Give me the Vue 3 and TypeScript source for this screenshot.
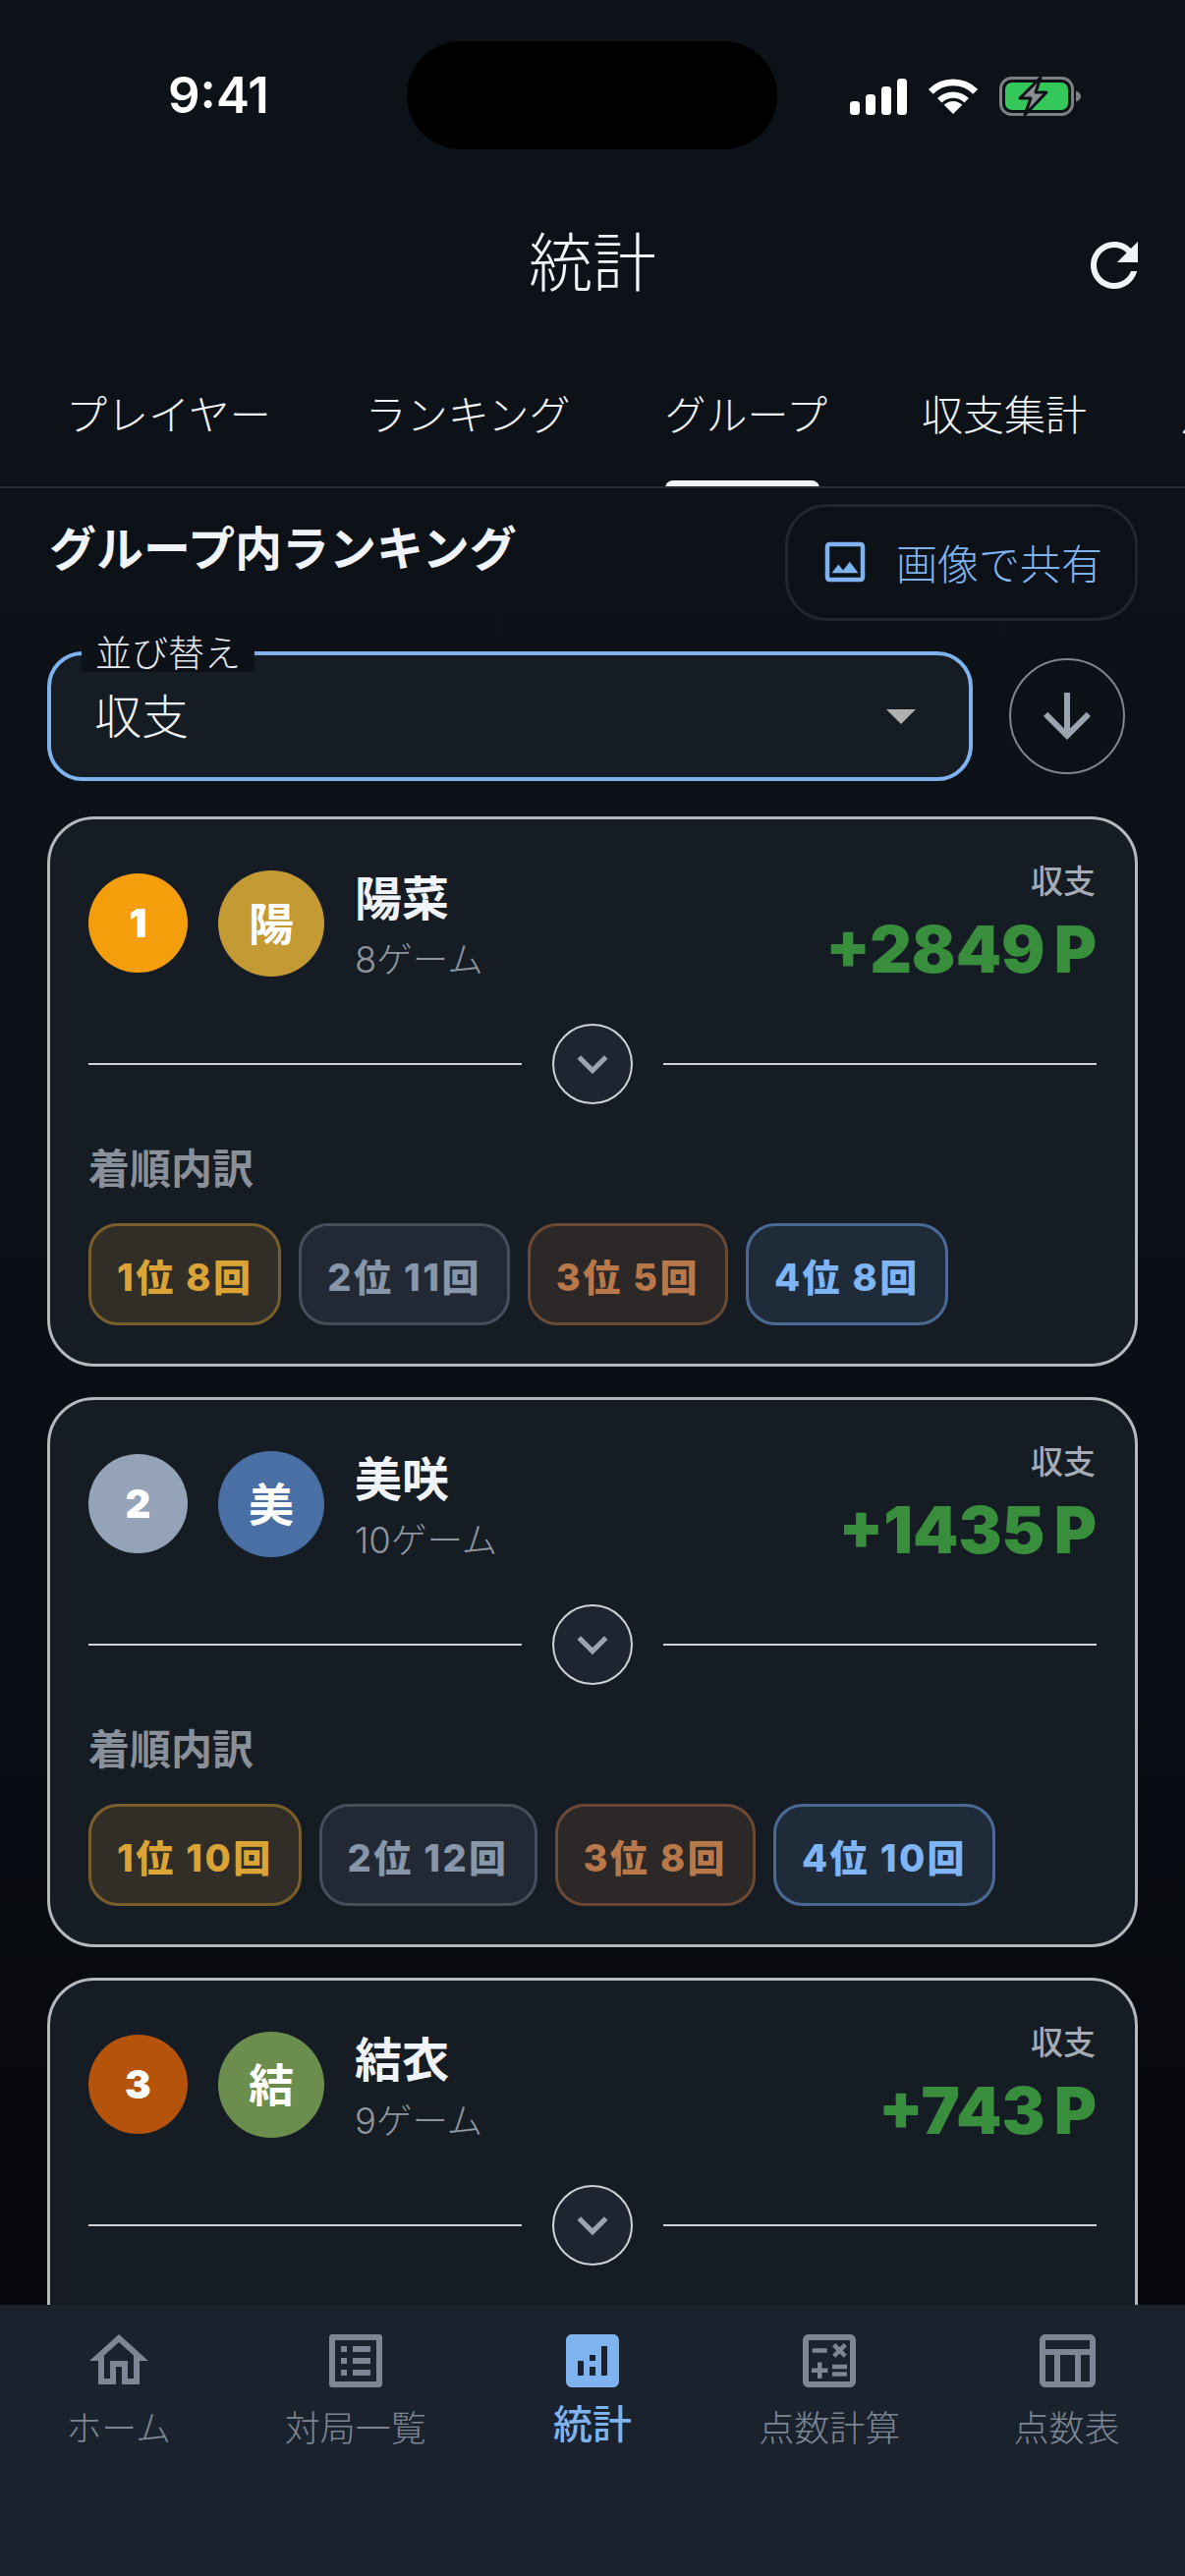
<template>
  <div class="page">
    <div class="status">
      <span class="time">9:41</span>
      <div class="island"></div>
      <div class="status-icons">
        <svg class="signal" width="58" height="37" viewBox="0 0 58 37" fill="#fff">
          <rect x="0" y="23" width="10" height="14" rx="3.5" />
          <rect x="16" y="16" width="10" height="21" rx="3.5" />
          <rect x="32" y="8" width="10" height="29" rx="3.5" />
          <rect x="48" y="0" width="10" height="37" rx="3.5" />
        </svg>
        <svg width="50" height="37" viewBox="0 0 50 38" fill="none" stroke="#fff">
          <path d="M1.7 13.7A33 33 0 0 1 48.3 13.7" stroke-width="7" />
          <path d="M10.9 22.9A20 20 0 0 1 39.1 22.9" stroke-width="6.5" />
          <path d="M25 37L15.5 27.5A13.4 13.4 0 0 1 34.5 27.5Z" fill="#fff" stroke="none" />
        </svg>
        <svg class="battery" width="84" height="40" viewBox="0 0 84 40">
          <rect x="1.5" y="1.5" width="73" height="37" rx="11" fill="none" stroke="#7e8083" stroke-width="3" />
          <rect x="6" y="6" width="64" height="28" rx="7" fill="#34c759" />
          <path d="M78 14.5q5 2 5 5.5t-5 5.5z" fill="#7e8083" />
          <path d="M42 1L21 22h11l-6 17 22-23H37z" fill="#8a8c90" stroke="#0d1118" stroke-width="3" stroke-linejoin="round" />
        </svg>
      </div>
    </div>

    <header class="header">
      <h1 class="title">統計</h1>
      <svg class="refresh" width="72" height="72" viewBox="0 0 24 24" fill="#f0f4f8">
        <path d="M17.65 6.35C16.2 4.8 14.21 4 12 4c-4.42 0-7.99 3.58-7.99 8s3.57 8 7.99 8c3.73 0 6.84-2.55 7.73-6h-2.08c-.82 2.33-3.04 4-5.65 4-3.31 0-6-2.69-6-6s2.69-6 6-6c1.66 0 3.14.69 4.22 1.78L13 11h7V4l-2.35 2.35z" />
      </svg>
    </header>

    <nav class="tabs">
      <div v-for="t in tabs" :key="t" class="tab" :class="{ active: t === 'グループ' }">{{ t }}</div>
    </nav>

    <main class="content">
      <div class="section-head">
        <h2 class="section-title">グループ内ランキング</h2>
        <button class="share">
          <svg width="54" height="54" viewBox="0 0 24 24" fill="#7eb3f0">
            <path d="M19 5v14H5V5h14m0-2H5c-1.1 0-2 .9-2 2v14c0 1.1.9 2 2 2h14c1.1 0 2-.9 2-2V5c0-1.1-.9-2-2-2zm-4.86 8.86l-3 3.87L9 13.14 6 17h12l-3.86-5.14z" />
          </svg>
          <span>画像で共有</span>
        </button>
      </div>

      <div class="sort-row">
        <div class="select">
          <span class="select-label">並び替え</span>
          <span class="select-value">収支</span>
          <svg class="caret" width="30" height="15" viewBox="0 0 30 15" fill="#b0b0b0"><path d="M0 0h30L15 15z" /></svg>
        </div>
        <button class="order">
          <svg width="72" height="72" viewBox="0 0 24 24" fill="#9aa3af">
            <path d="M20 12l-1.41-1.41L13 16.17V4h-2v12.17l-5.58-5.59L4 12l8 8 8-8z" />
          </svg>
        </button>
      </div>

      <section v-for="p in players" :key="p.rank" class="card">
        <div class="card-head">
          <div class="rank" :style="{ background: p.rankColor }">{{ p.rank }}</div>
          <div class="avatar" :style="{ background: p.avatarColor }">{{ p.name[0] }}</div>
          <div class="who">
            <div class="name">{{ p.name }}</div>
            <div class="games">{{ p.games }}ゲーム</div>
          </div>
          <div class="score">
            <div class="score-label">収支</div>
            <div class="score-value">{{ p.score }} P</div>
          </div>
        </div>

        <div class="divider">
          <span class="line"></span>
          <button class="expand">
            <svg width="62" height="62" viewBox="0 0 24 24" fill="#9aa3af">
              <path d="M16.59 8.59L12 13.17 7.41 8.59 6 10l6 6 6-6z" />
            </svg>
          </button>
          <span class="line"></span>
        </div>

        <template v-if="p.counts.length">
          <div class="breakdown-label">着順内訳</div>
          <div class="chips">
            <span v-for="(c, i) in p.counts" :key="i" class="chip" :class="'chip' + (i + 1)">{{ i + 1 }}位 {{ c }}回</span>
          </div>
        </template>
      </section>
    </main>

    <footer class="bottom">
      <div v-for="n in navItems" :key="n.label" class="nav-item" :class="{ on: n.label === '統計' }">
        <svg width="72" height="72" viewBox="0 0 24 24" fill="currentColor" v-html="n.icon"></svg>
        <span class="nav-label">{{ n.label }}</span>
      </div>
    </footer>
  </div>
</template>

<script setup lang="ts">
interface Player {
  rank: number
  name: string
  games: number
  score: string
  rankColor: string
  avatarColor: string
  counts: number[]
}

const tabs = ['プレイヤー', 'ランキング', 'グループ', '収支集計', '月別']

const players: Player[] = [
  { rank: 1, name: '陽菜', games: 8, score: '+2849', rankColor: '#f59e0b', avatarColor: '#c49a34', counts: [8, 11, 5, 8] },
  { rank: 2, name: '美咲', games: 10, score: '+1435', rankColor: '#94a3b8', avatarColor: '#4a6fa5', counts: [10, 12, 8, 10] },
  { rank: 3, name: '結衣', games: 9, score: '+743', rankColor: '#b45309', avatarColor: '#6b8e4e', counts: [] },
]

const navItems = [
  { label: 'ホーム', icon: '<path d="M12 5.69l5 4.5V18h-2v-6H9v6H7v-7.81l5-4.5M12 3L2 12h3v8h6v-6h2v6h6v-8h3L12 3z"/>' },
  { label: '対局一覧', icon: '<path d="M19 5v14H5V5h14m1.1-2H3.9c-.5 0-.9.4-.9.9v16.2c0 .4.4.9.9.9h16.2c.4 0 .9-.5.9-.9V3.9c0-.5-.5-.9-.9-.9zM11 7h6v2h-6V7zm0 4h6v2h-6v-2zm0 4h6v2h-6v-2zM7 7h2v2H7V7zm0 4h2v2H7v-2zm0 4h2v2H7v-2z"/>' },
  { label: '統計', icon: '<path d="M19 3H5c-1.1 0-2 .9-2 2v14c0 1.1.9 2 2 2h14c1.1 0 2-.9 2-2V5c0-1.1-.9-2-2-2zM9 17H7v-5h2v5zm4 0h-2v-3h2v3zm0-5h-2v-2h2v2zm4 5h-2V7h2v10z"/>' },
  { label: '点数計算', icon: '<path d="M19 3H5c-1.1 0-2 .9-2 2v14c0 1.1.9 2 2 2h14c1.1 0 2-.9 2-2V5c0-1.1-.9-2-2-2zm0 16H5V5h14v14z"/><path d="M6.25 7.72h5v1.5h-5zM13 15.75h5v1.5h-5zM13 13.25h5v1.5h-5z"/><polygon points="8,18 9.5,18 9.5,16 11.5,16 11.5,14.5 9.5,14.5 9.5,12.5 8,12.5 8,14.5 6,14.5 6,16 8,16"/><polygon points="14.09,10.95 15.5,9.54 16.91,10.95 17.97,9.89 16.56,8.47 17.97,7.06 16.91,6 15.5,7.41 14.09,6 13.03,7.06 14.44,8.47 13.03,9.89"/>' },
  { label: '点数表', icon: '<path d="M20 3H5c-1.1 0-2 .9-2 2v14c0 1.1.9 2 2 2h15c1.1 0 2-.9 2-2V5c0-1.1-.9-2-2-2zm0 2v3H5V5h15zm-5 14h-5v-9h5v9zM5 10h3v9H5v-9zm12 9v-9h3v9h-3z"/>' },
]
</script>

<style>
html, body { background: #0d1118; }
</style>

<style scoped>
.page {
  width: 1206px;
  height: 2622px;
  display: flex;
  flex-direction: column;
  overflow: hidden;
  position: relative;
  background: linear-gradient(#0d1118 0, #0c1017 1100px, #06080d 2346px);
  color: #f0f4f8;
  font-family: Inter, "Noto Sans CJK JP", sans-serif;
}
.status {
  height: 180px;
  flex: none;
  display: flex;
  align-items: flex-start;
  padding-top: 66px;
  box-sizing: border-box;
}
.time {
  margin-left: 171px;
  font-size: 51px;
  line-height: 62px;
  font-weight: 600;
  color: #fff;
}
.island {
  position: absolute;
  left: 414px;
  top: 42px;
  width: 377px;
  height: 110px;
  border-radius: 55px;
  background: #000;
}
.status-icons {
  margin-left: auto;
  margin-right: 105px;
  margin-top: 12px;
  display: flex;
  align-items: center;
  gap: 22px;
}
.header {
  height: 176px;
  flex: none;
  display: flex;
  align-items: center;
  justify-content: center;
  position: relative;
}
.title {
  margin: 0;
  font-size: 65px;
  font-weight: 300;
  line-height: 80px;
}
.refresh {
  position: absolute;
  left: 1098px;
  top: 54px;
}
.tabs {
  height: 141px;
  flex: none;
  box-sizing: border-box;
  display: flex;
  padding-left: 19px;
  border-bottom: 2px solid #262b33;
  overflow: hidden;
}
.tab {
  flex: none;
  padding: 0 48px 13px;
  display: flex;
  align-items: center;
  font-size: 42px;
  font-weight: 300;
  position: relative;
}
.tab.active::after {
  content: "";
  position: absolute;
  left: 48px;
  right: 56px;
  bottom: -2px;
  height: 8px;
  border-radius: 8px 8px 0 0;
  background: #f0f4f8;
}
.content {
  flex: 1;
  min-height: 0;
  overflow: hidden;
  padding: 16px 48px 0;
}
.section-head {
  display: flex;
  justify-content: space-between;
  align-items: flex-start;
}
.section-title {
  margin: 16px 0 0 2px;
  font-size: 48px;
  line-height: 60px;
  font-weight: 700;
}
.share {
  width: 359px;
  height: 119px;
  box-sizing: border-box;
  border: 3px solid #22262e;
  border-radius: 42px;
  background: transparent;
  color: #7eb3f0;
  display: flex;
  align-items: center;
  gap: 25px;
  padding: 0 0 2px 31px;
  font: inherit;
  font-size: 42px;
  font-weight: 300;
}
.sort-row {
  margin-top: 31px;
  display: flex;
  align-items: center;
}
.select {
  position: relative;
  width: 942px;
  height: 132px;
  box-sizing: border-box;
  border: 4px solid #7eb3f0;
  border-radius: 36px;
  background: #151c24;
  display: flex;
  align-items: center;
  padding: 0 46px;
  justify-content: space-between;
}
.select-label {
  position: absolute;
  left: 31px;
  top: -20px;
  padding: 0 14px;
  font-size: 37px;
  line-height: 37px;
  font-weight: 300;
  background: #0c1017;
  color: #e6eaef;
}
.select-value {
  margin: -6px 0 0 -2px;
  font-size: 48px;
  font-weight: 300;
}
.caret {
  margin-right: 8px;
}
.order {
  margin-left: 37px;
  width: 118px;
  height: 118px;
  padding: 0;
  border: 2px solid #7f8690;
  border-radius: 50%;
  background: transparent;
  display: flex;
  align-items: center;
  justify-content: center;
}
.card {
  margin-top: 36px;
  height: 560px;
  box-sizing: border-box;
  border: 3px solid #b5b8bc;
  border-radius: 48px;
  background: #151c24;
  padding: 52px 39px 40px 39px;
}
.card + .card {
  margin-top: 31px;
}
.card:last-child {
  height: 700px;
}
.card-head {
  height: 107px;
  display: flex;
  align-items: center;
}
.rank {
  width: 101px;
  height: 101px;
  border-radius: 50%;
  display: flex;
  align-items: center;
  justify-content: center;
  font-size: 40px;
  font-weight: 900;
  color: #fff;
}
.avatar {
  margin-left: 31px;
  width: 108px;
  height: 108px;
  box-sizing: border-box;
  padding-bottom: 5px;
  border-radius: 50%;
  display: flex;
  align-items: center;
  justify-content: center;
  font-size: 46px;
  font-weight: 700;
  color: #fff;
}
.who {
  margin: 6px 0 0 31px;
}
.name {
  font-size: 48px;
  font-weight: 700;
  line-height: 60px;
}
.games {
  font-size: 36.5px;
  line-height: 48px;
  margin-top: 8px;
  font-weight: 300;
  color: #8f959e;
}
.score {
  margin: -1px 0 0 auto;
  text-align: right;
}
.score-label {
  font-size: 33px;
  line-height: 42px;
  margin-bottom: 11px;
  margin-right: 1px;
  font-weight: 500;
  color: #a4abb5;
}
.score-value {
  font-size: 66px;
  line-height: 74px;
  font-weight: 900;
  word-spacing: -4px;
  color: #388e3c;
}
.divider {
  margin-top: 49px;
  display: flex;
  align-items: center;
  gap: 31px;
}
.line {
  flex: 1;
  height: 2px;
  background: #d0d2d5;
}
.expand {
  width: 82px;
  height: 82px;
  padding: 0;
  border: 2px solid #cfd2d6;
  border-radius: 50%;
  background: #1e2530;
  display: flex;
  align-items: center;
  justify-content: center;
}
.breakdown-label {
  margin-top: 41px;
  font-size: 42px;
  line-height: 50px;
  font-weight: 700;
  color: #8a9099;
}
.chips {
  margin-top: 30px;
  display: flex;
  gap: 18px;
}
.chip {
  height: 104px;
  box-sizing: border-box;
  border: 3px solid;
  border-radius: 30px;
  padding: 0 26px;
  display: flex;
  align-items: center;
  font-size: 38px;
  font-weight: 800;
  letter-spacing: 2.4px;
}
.chip1 { background: #302e26; border-color: #7a5f2a; color: #dca437; }
.chip2 { background: #222935; border-color: #464e5c; color: #8796a8; }
.chip3 { background: #2b2827; border-color: #6b4a35; color: #b9784a; }
.chip4 { background: #202b3a; border-color: #4a6a95; color: #7fb5f5; }
.bottom {
  height: 276px;
  flex: none;
  box-sizing: border-box;
  background: #1a222e;
  padding-top: 21px;
  display: grid;
  grid-template-columns: repeat(5, 1fr);
  align-content: start;
}
.nav-item {
  display: flex;
  flex-direction: column;
  align-items: center;
  color: #7c8694;
}
.nav-label {
  margin-top: 11px;
  font-size: 36px;
  line-height: 44px;
  font-weight: 300;
}
.nav-item.on {
  color: #7eb3f0;
}
.nav-item.on .nav-label {
  margin-top: 7px;
  font-size: 40px;
  font-weight: 500;
}
</style>
